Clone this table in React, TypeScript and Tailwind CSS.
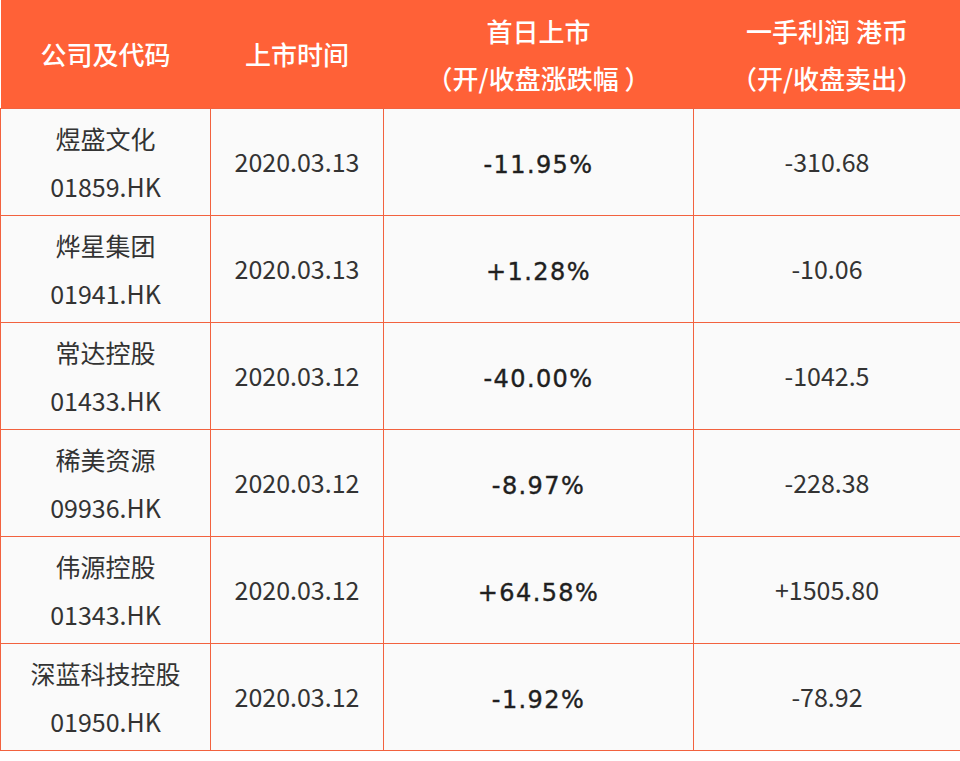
const rows = [
  { name: "煜盛文化", code: "01859.HK", date: "2020.03.13", pct: "-11.95%", profit: "-310.68" },
  { name: "烨星集团", code: "01941.HK", date: "2020.03.13", pct: "+1.28%", profit: "-10.06" },
  { name: "常达控股", code: "01433.HK", date: "2020.03.12", pct: "-40.00%", profit: "-1042.5" },
  { name: "稀美资源", code: "09936.HK", date: "2020.03.12", pct: "-8.97%", profit: "-228.38" },
  { name: "伟源控股", code: "01343.HK", date: "2020.03.12", pct: "+64.58%", profit: "+1505.80" },
  { name: "深蓝科技控股", code: "01950.HK", date: "2020.03.12", pct: "-1.92%", profit: "-78.92" },
];

export default function App() {
  return (
    <div
      className="w-[960px] h-[761px] bg-white"
      style={{ fontFamily: '"Noto Sans CJK SC", "Noto Sans", sans-serif' }}
    >
      <table className="w-[960px] border-collapse table-fixed text-center">
        <colgroup>
          <col className="w-[210px]" />
          <col className="w-[173px]" />
          <col className="w-[310px]" />
          <col className="w-[267px]" />
        </colgroup>
        <thead>
          <tr className="h-[108px] bg-[#ff6137] text-white text-[26px] leading-[47px]">
            <th className="font-medium">公司及代码</th>
            <th className="font-medium">上市时间</th>
            <th className="font-medium">
              <div>首日上市</div>
              <div>（开/收盘涨跌幅 ）</div>
            </th>
            <th className="font-medium">
              <div>一手利润 港币</div>
              <div>（开/收盘卖出）</div>
            </th>
          </tr>
        </thead>
        <tbody className="bg-[#fafafa] text-[#333333] text-[25px]">
          {rows.map((r) => (
            <tr key={r.code} className="h-[107px]">
              <td className="border border-[#f2623f] leading-[48px]">
                <div>{r.name}</div>
                <div>{r.code}</div>
              </td>
              <td className="border border-[#f2623f]">{r.date}</td>
              <td
                className="border border-[#f2623f] pt-[6px] text-[24px] text-[#1f1f1f] tracking-[1.4px] [-webkit-text-stroke:0.4px_#1f1f1f]"
                style={{ fontFamily: '"DejaVu Sans", sans-serif' }}
              >
                {r.pct}
              </td>
              <td className="border border-[#f2623f]">{r.profit}</td>
            </tr>
          ))}
        </tbody>
      </table>
    </div>
  );
}
